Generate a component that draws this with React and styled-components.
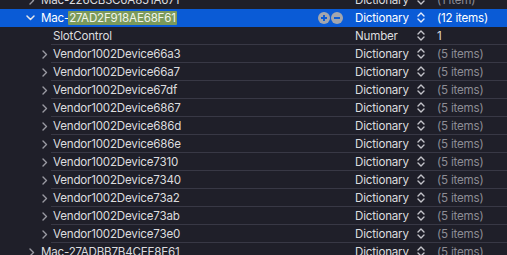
import React from 'react';
import styled, { createGlobalStyle } from 'styled-components';

const GlobalStyle = createGlobalStyle`
    html, body {
        margin: 0;
        padding: 0;
        background: #1f1f29;
    }
    body {
        font-family: Inter, "Liberation Sans", Arial, sans-serif;
        font-size: 11.6px;
        letter-spacing: -0.2px;
        -webkit-font-smoothing: antialiased;
    }
`;

const Outline = styled.div`
    width: 507px;
    height: 255px;
    overflow: hidden;
    background: #1f1f29;
    color: #dcdcdf;
`;

const Scroller = styled.div`
    margin-top: -9px;
`;

const Row = styled.div`
    display: flex;
    height: 18px;
    line-height: 18px;
    background: ${props => props.$selected ? '#0a5bd6' : 'transparent'};
    color: ${props => props.$selected ? '#ffffff' : '#dcdcdf'};
`;

const Disclosure = styled.div`
    flex: 0 0 ${props => props.$depth ? 51 : 39}px;
    display: flex;
    align-items: center;
    justify-content: flex-end;
    padding-right: ${props => props.$depth ? 3 : 4}px;
    box-sizing: border-box;
`;

const Body = styled.div`
    flex: 1;
    display: flex;
    min-width: 0;
    box-sizing: border-box;
    border-bottom: 1px solid ${props => props.$separator ? '#383845' : 'transparent'};
`;

const Key = styled.div`
    flex: 1;
    display: flex;
    align-items: center;
    padding-left: 2px;
    padding-right: 12px;
    white-space: nowrap;
    overflow: hidden;
`;

const KeyText = styled.span`
    flex: 1;
`;

const Match = styled.span`
    background: #7b9a5a;
    color: #f1f5ea;
    padding: 0 1px;
    margin-left: -1px;
    border-radius: 1px;
`;

const Actions = styled.div`
    display: flex;
    gap: 1px;
`;

const RoundButton = styled.svg`
    width: 12px;
    height: 12px;
    display: block;
`;

const Type = styled.div`
    flex: 0 0 62px;
    white-space: nowrap;
`;

const Stepper = styled.div`
    flex: 0 0 20px;
    display: flex;
    align-items: center;
`;

const Value = styled.div`
    flex: 0 0 70px;
    white-space: nowrap;
    color: ${props => props.$muted ? '#8d8d95' : 'inherit'};
`;

const Chevron = ({ open }) => (
    open ? (
        <svg width="9" height="6" viewBox="0 0 9 6">
            <path d="M1 1 L4.5 4.5 L8 1" fill="none" stroke="#e6e6ea" strokeWidth="1.5" strokeLinecap="round" strokeLinejoin="round" />
        </svg>
    ) : (
        <svg width="6" height="9" viewBox="0 0 6 9">
            <path d="M1 1 L4.5 4.5 L1 8" fill="none" stroke="#9a9aa2" strokeWidth="1.4" strokeLinecap="round" strokeLinejoin="round" />
        </svg>
    )
);

const UpDown = ({ light }) => (
    <svg width="8" height="11" viewBox="0 0 8 11">
        <path d="M1 4 L4 1 L7 4 M1 7 L4 10 L7 7" fill="none" stroke={light ? '#e8eefc' : '#c4c4ca'} strokeWidth="1.4" strokeLinecap="round" strokeLinejoin="round" />
    </svg>
);

const Plus = () => (
    <RoundButton viewBox="0 0 12 12">
        <circle cx="6" cy="6" r="6" fill="#a3a6ad" />
        <path d="M6 3 V9 M3 6 H9" stroke="#0a5bd6" strokeWidth="1.9" />
    </RoundButton>
);

const Minus = () => (
    <RoundButton viewBox="0 0 12 12">
        <circle cx="6" cy="6" r="6" fill="#a3a6ad" />
        <path d="M3 6 H9" stroke="#0a5bd6" strokeWidth="1.9" />
    </RoundButton>
);

const vendors = ['66a3', '66a7', '67df', '6867', '686d', '686e', '7310', '7340', '73a2', '73ab', '73e0'];

const rows = [
    { key: 'Mac-226CB3C6A851A671', depth: 0, type: 'Dictionary', value: '(1 item)', muted: true },
    { key: 'Mac-', match: '27AD2F918AE68F61', depth: 0, type: 'Dictionary', value: '(12 items)', open: true, selected: true },
    { key: 'SlotControl', depth: 1, type: 'Number', value: '1', leaf: true },
    ...vendors.map(v => ({ key: 'Vendor1002Device' + v, depth: 1, type: 'Dictionary', value: '(5 items)', muted: true })),
    { key: 'Mac-27ADBB7B4CEE8E61', depth: 0, type: 'Dictionary', value: '(5 items)', muted: true },
];

const PlistRow = ({ row }) => (
    <Row $selected={row.selected}>
        <Disclosure $depth={row.depth}>
            {!row.leaf && <Chevron open={row.open} />}
        </Disclosure>
        <Body $separator={row.depth > 0}>
            <Key>
                <KeyText>
                    {row.key}
                    {row.match && <Match>{row.match}</Match>}
                </KeyText>
                {row.selected && (
                    <Actions>
                        <Plus />
                        <Minus />
                    </Actions>
                )}
            </Key>
            <Type>{row.type}</Type>
            <Stepper><UpDown light={row.selected} /></Stepper>
            <Value $muted={row.muted && !row.selected}>{row.value}</Value>
        </Body>
    </Row>
);

export default function App() {
    return (
        <>
            <GlobalStyle />
            <Outline>
                <Scroller>
                    {rows.map(row => <PlistRow key={row.key + (row.match || '')} row={row} />)}
                </Scroller>
            </Outline>
        </>
    );
}
